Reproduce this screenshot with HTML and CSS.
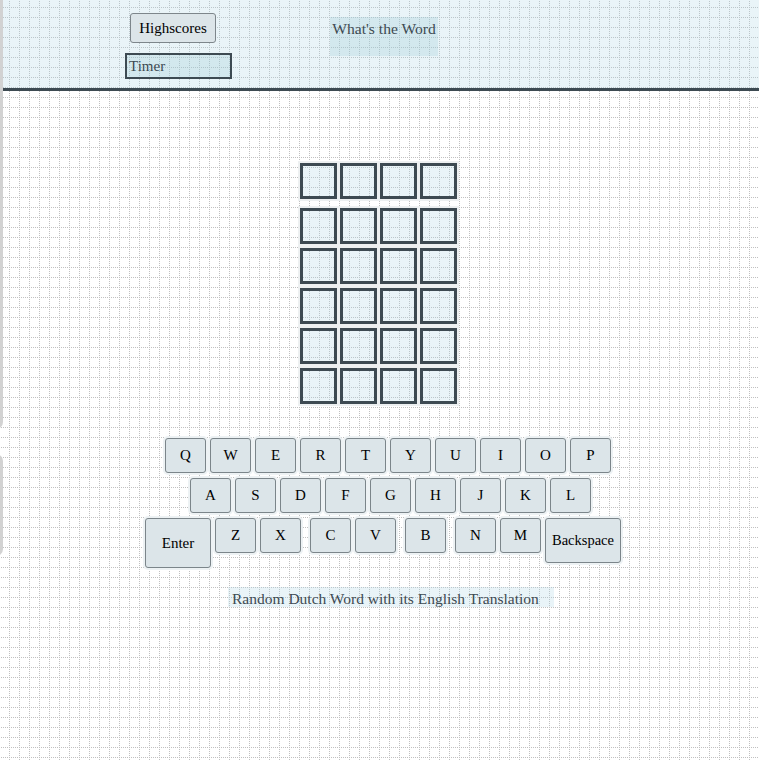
FILE: index.html
```html
<!DOCTYPE html>
<html lang="en">
<head>
<meta charset="utf-8">
<title>What's the Word</title>
<link rel="stylesheet" href="styles.css">
</head>
<body>
<div class="side side-a"></div>
<div class="side side-b"></div>
<header class="header">
  <div class="hleft">
    <button class="hs-btn">Highscores</button>
    <div class="timer">Timer</div>
  </div>
  <div class="title">What's the Word</div>
</header>
<main class="main">
  <div class="board">
    <div class="brow first"><div class="tile"></div><div class="tile"></div><div class="tile"></div><div class="tile"></div></div>
    <div class="brow"><div class="tile"></div><div class="tile"></div><div class="tile"></div><div class="tile"></div></div>
    <div class="brow"><div class="tile"></div><div class="tile"></div><div class="tile"></div><div class="tile"></div></div>
    <div class="brow"><div class="tile"></div><div class="tile"></div><div class="tile"></div><div class="tile"></div></div>
    <div class="brow"><div class="tile"></div><div class="tile"></div><div class="tile"></div><div class="tile"></div></div>
    <div class="brow"><div class="tile"></div><div class="tile"></div><div class="tile"></div><div class="tile"></div></div>
  </div>
  <div class="keyboard">
    <div class="krow r1">
      <button class="key">Q</button><button class="key">W</button><button class="key">E</button><button class="key">R</button><button class="key">T</button><button class="key">Y</button><button class="key">U</button><button class="key">I</button><button class="key">O</button><button class="key">P</button>
    </div>
    <div class="krow r2">
      <button class="key">A</button><button class="key">S</button><button class="key">D</button><button class="key">F</button><button class="key">G</button><button class="key">H</button><button class="key">J</button><button class="key">K</button><button class="key">L</button>
    </div>
    <div class="krow r3">
      <button class="key enter">Enter</button><button class="key">Z</button><button class="key wide-after">X</button><button class="key">C</button><button class="key wide-after">V</button><button class="key wide-after">B</button><button class="key">N</button><button class="key">M</button><button class="key back">Backspace</button>
    </div>
  </div>
  <div class="translation">Random Dutch Word with its English Translation</div>
</main>
</body>
</html>
```
FILE: styles.css
```css
html {
  background-color: #ffffff;
  background-image:
    conic-gradient(from 90deg at 9px 1px, #c0c0c0 0deg 90deg, transparent 90deg 360deg),
    conic-gradient(from 90deg at 1px 9px, #c0c0c0 0deg 90deg, transparent 90deg 360deg);
  background-size: 10px 2px, 2px 10px;
  background-position: 0 0, 0 -2px;
  min-height: 100%;
}

body {
  margin: 0;
  font-family: "Liberation Serif", "Times New Roman", serif;
  font-size: 15px;
  color: #000;
  position: relative;
  min-height: 761px;
}

.side {
  position: absolute;
  left: -17px;
  width: 20px;
  box-sizing: border-box;
  border: 3px solid #d2d2d2;
  border-radius: 7px;
}
.side-a { top: -10px; height: 439px; border-top-color: #3d4a52; }
.side-b { top: 454px; height: 102px; }

.header {
  margin-left: 3px;
  height: 88px;
  background: rgba(173, 216, 230, 0.27);
  border-bottom: 3px solid #3d4a52;
  display: flex;
  align-items: flex-start;
}

.hleft {
  display: flex;
  flex-direction: column;
  align-items: flex-start;
  padding-top: 13px;
  padding-left: 122px;
  gap: 10px;
}

.hs-btn {
  margin: 0 0 0 5px;
  width: 86px;
  height: 30px;
  padding: 0;
  font-family: inherit;
  font-size: 15px;
  color: #000;
  background: #dce5e9;
  border: 1px solid #7d868b;
  border-radius: 3px;
}

.timer {
  box-sizing: border-box;
  width: 107px;
  height: 26px;
  border: 2px solid #3d4a52;
  background: rgba(150, 200, 210, 0.27);
  color: #3d4a52;
  padding-left: 2px;
  line-height: 22px;
}

.title {
  margin-left: 98px;
  margin-top: 17px;
  width: 108px;
  height: 39px;
  box-sizing: border-box;
  padding-top: 3px;
  text-align: center;
  background: rgba(150, 200, 210, 0.27);
  color: #3d4a52;
  font-size: 15.6px;
  line-height: 18px;
  white-space: nowrap;
}

.main {
  display: flex;
  flex-direction: column;
}

.board {
  align-self: flex-start;
  margin-top: 72px;
  margin-left: 300px;
  display: flex;
  flex-direction: column;
  gap: 4px;
}

.brow {
  display: flex;
  gap: 3px;
}
.brow.first { margin-bottom: 5px; }

.tile {
  box-sizing: border-box;
  width: 37px;
  height: 36px;
  border: 3px solid #3d4a52;
  background: rgba(173, 216, 230, 0.27);
  box-shadow: 0 0 0 2px #edf0f1;
}

.keyboard {
  margin-top: 34px;
  display: flex;
  flex-direction: column;
  align-items: flex-start;
  gap: 5px;
}

.krow {
  display: flex;
  align-items: flex-start;
  gap: 4px;
}
.r1 { margin-left: 165px; }
.r2 { margin-left: 190px; }
.r3 { margin-left: 145px; }

.key {
  box-sizing: border-box;
  width: 41px;
  height: 35px;
  margin: 0;
  padding: 0;
  font-family: inherit;
  font-size: 15px;
  color: #000;
  background: #dce5e9;
  border: 1px solid #7b858a;
  border-radius: 3px;
  box-shadow: 0 0 0 2px #edf2f4;
}
.key.wide-after { margin-right: 5px; }
.key.enter { width: 66px; height: 50px; }
.key.back { width: 76px; height: 45px; font-size: 14.5px; }

.translation {
  margin-top: 19px;
  margin-left: 228px;
  align-self: flex-start;
  height: 20px;
  box-sizing: border-box;
  padding: 2px 15px 0 4px;
  font-size: 15.5px;
  line-height: 20px;
  background: rgba(173, 216, 230, 0.27);
  color: #3d4a52;
  white-space: nowrap;
}
```
